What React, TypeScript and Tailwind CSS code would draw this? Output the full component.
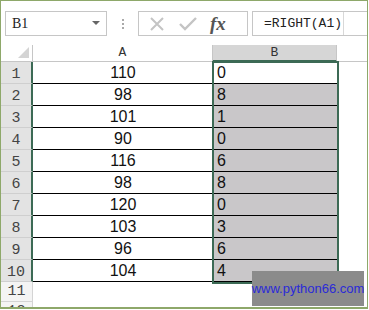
import React from "react";

const aVals = ["110", "98", "101", "90", "116", "98", "120", "103", "96", "104"];
const bVals = ["0", "8", "1", "0", "6", "8", "0", "3", "6", "4"];

export default function App() {
  return (
    <div className="w-[369px] h-[310px] bg-white overflow-hidden">
      <div className="w-[368px] h-[309px] border border-[#8ea86a] border-b-2 flex flex-col overflow-hidden relative">
        {/* toolbar */}
        <div className="h-[44px] flex items-start pt-[10px] shrink-0">
          <div className="ml-[4px] w-[102px] h-[25px] border border-[#c6c6c6] flex items-center justify-between pl-[6px] pr-[6px]">
            <span className="text-[14px] text-[#222] leading-none" style={{ fontFamily: '"Liberation Serif", serif' }}>B1</span>
            <svg width="8" height="5" viewBox="0 0 8 5"><path d="M0 0 L8 0 L4 4 Z" fill="#666" /></svg>
          </div>
          <div className="ml-[15px] h-[25px] flex flex-col justify-center gap-[2px]">
            <div className="w-[2px] h-[2px] bg-[#aaa]" />
            <div className="w-[2px] h-[2px] bg-[#aaa]" />
            <div className="w-[2px] h-[2px] bg-[#aaa]" />
          </div>
          <div className="ml-[14px] w-[110px] h-[25px] border border-[#c6c6c6] flex items-center">
            <svg className="ml-[10px]" width="16" height="16" viewBox="0 0 16 16">
              <path d="M2 2 L14 14 M14 2 L2 14" stroke="#c4c4c4" strokeWidth="2" />
            </svg>
            <svg className="ml-[14px]" width="18" height="14" viewBox="0 0 18 14">
              <path d="M1 7 L6 12 L17 1" stroke="#c4c4c4" strokeWidth="2.4" fill="none" />
            </svg>
            <span className="ml-[13px] text-[19px] italic font-bold text-[#555] leading-none" style={{ fontFamily: '"Liberation Serif", serif' }}>fx</span>
          </div>
          <div className="ml-[4px] flex-1 h-[25px] border border-r-0 border-[#c6c6c6] flex items-center relative">
            <span className="ml-[11px] text-[13px] text-[#222] leading-none" style={{ fontFamily: '"Liberation Mono", monospace' }}>=RIGHT(A1)</span>
            <div className="absolute left-[90px] top-0 h-full w-px bg-[#d8d8d8]" />
          </div>
        </div>
        {/* grid */}
        <div className="relative">
          <div className="grid grid-cols-[32px_180px_124px_1fr]" style={{ fontFamily: '"Liberation Sans", Arial, sans-serif' }}>
            {/* header row */}
            <div className="h-[17px] border-b border-r border-[#c6c6c6] bg-white relative flex items-end justify-end pr-[3px] pb-[3px]">
              <svg width="11" height="11" viewBox="0 0 11 11"><path d="M11 0 L11 11 L0 11 Z" fill="#d4d4d4" /></svg>
            </div>
            <div className="h-[17px] border-b border-r border-[#c6c6c6] bg-white flex items-center justify-center text-[13px] text-[#333]" style={{ fontFamily: '"Liberation Mono", monospace' }}>A</div>
            <div className="h-[17px] border-b-2 border-b-[#3c6a55] border-r border-r-[#c6c6c6] bg-[#d6d6d6] flex items-center justify-center text-[13px] text-[#333]" style={{ fontFamily: '"Liberation Mono", monospace' }}>B</div>
            <div className="h-[17px] border-b border-[#c6c6c6] bg-white" />
            {aVals.map((a, i) => (
              <React.Fragment key={i}>
                <div className="h-[22px] bg-[#e3e3e3] border-b border-b-[#cfcfcf] border-r-2 border-r-[#3c6a55] flex items-end justify-center pb-[1px] text-[15px] text-[#444] leading-none" style={{ fontFamily: '"Liberation Mono", monospace' }}>{i + 1}</div>
                <div className="h-[22px] border-b border-black flex items-center justify-center text-[16px] text-[#111] leading-none">{a}</div>
                <div className={`h-[22px] border-b border-black flex items-center pl-[4px] text-[16px] text-[#111] leading-none ${i === 0 ? "bg-white" : "bg-[#c9c7c9]"}`}>{bVals[i]}</div>
                <div className="h-[22px] bg-white" />
              </React.Fragment>
            ))}
            {[11, 12].map((n) => (
              <React.Fragment key={n}>
                <div className="h-[20px] bg-[#f4f4f4] border-b border-r border-[#d4d4d4] flex items-center justify-center text-[15px] text-[#444] leading-none" style={{ fontFamily: '"Liberation Mono", monospace' }}>{n}</div>
                <div className="h-[20px] bg-white" />
                <div className="h-[20px] bg-white" />
                <div className="h-[20px] bg-white" />
              </React.Fragment>
            ))}
          </div>
          {/* selection border */}
          <div className="absolute left-[211px] top-[16px] w-[127px] h-[223px] border-2 border-[#3c6a55] pointer-events-none" />
        </div>
        {/* watermark */}
        <div className="absolute left-[251px] top-[270px] w-[112px] h-[35px] bg-[#8b8b8b] flex items-center justify-center text-[13px] text-[#2a2ad8]" style={{ fontFamily: '"Liberation Sans", Arial, sans-serif' }}>
          www.python66.com
        </div>
      </div>
    </div>
  );
}
